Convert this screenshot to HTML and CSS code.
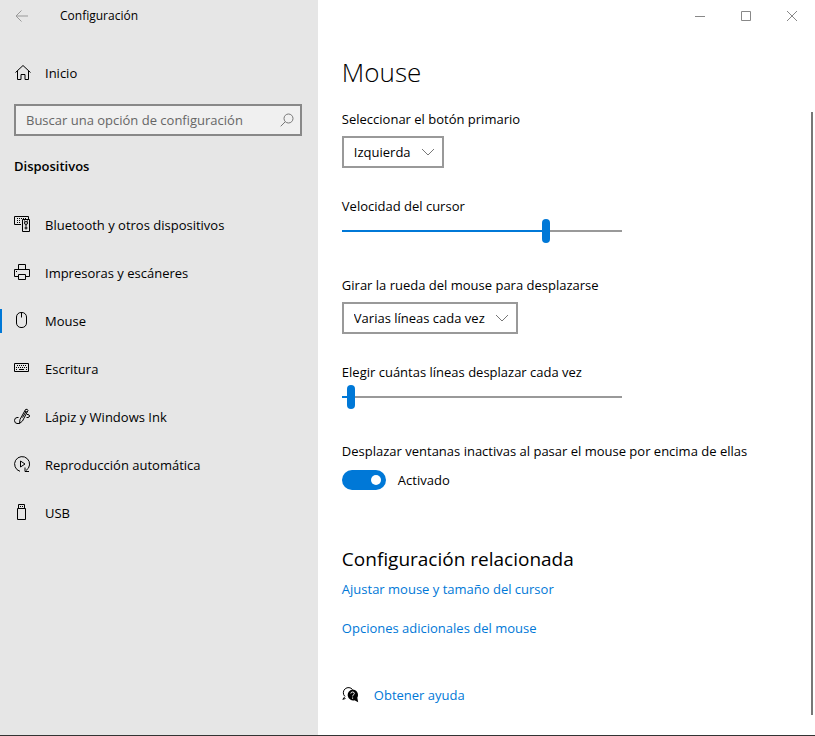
FILE: index.html
```html
<!DOCTYPE html>
<html lang="es">
<head>
<meta charset="utf-8">
<meta name="viewport" content="width=device-width, initial-scale=1">
<title>Configuración</title>
<link rel="stylesheet" href="styles.css">
</head>
<body>
<div class="window">
  <aside class="sidebar">
    <header class="app-bar">
      <button class="back" type="button" aria-label="Atrás">
        <svg width="14" height="12" viewBox="0 0 14 12"><path d="M6.500 .5L1 6l5.500 5.500M1 6h12"/></svg>
      </button>
      <span class="app-name">Configuración</span>
    </header>
    <a class="nav-link home" href="#inicio">
      <svg class="icon" width="17" height="18" viewBox="0 0 17 18"><path d="M1.500 8.500L9 1.500l7.500 7M3.500 7v8.500h3.500v-5h4v5h3.500V7"/></svg>
      <span>Inicio</span>
    </a>
    <form class="search">
      <input type="search" aria-label="Buscar una opción de configuración" placeholder="Buscar una opción de configuración">
      <button type="submit" aria-label="Buscar">
        <svg width="14" height="14" viewBox="0 0 14 14"><circle cx="8.500" cy="5.500" r="4.500"/><path d="M5.200 8.800L.7 13.300"/></svg>
      </button>
    </form>
    <h2 class="category">Dispositivos</h2>
    <nav class="nav">
      <a class="nav-link" href="#bluetooth">
        <svg class="icon" width="17" height="18" viewBox="0 0 17 18"><path d="M7 8.500H.5v-8h14V3"/><path d="M3 2.500h10M3 4.500h4M3 6.500h4" stroke-dasharray="1 1"/><path d="M8.500 3.500h7v12h-7z"/><circle cx="12" cy="7" r="1.500"/><circle cx="12" cy="12" r="1"/><path d="M10 5h1M13 5h1M12 9v1.500"/></svg>
        <span>Bluetooth y otros dispositivos</span>
      </a>
      <a class="nav-link" href="#impresoras">
        <svg class="icon" width="17" height="18" viewBox="0 0 17 18"><path d="M4.500 5.500v-5h7v5M4 12.500H.5v-7h15v7H12M4.500 10.500h7v5h-7zM2 7.500h1"/></svg>
        <span>Impresoras y escáneres</span>
      </a>
      <a class="nav-link current" href="#mouse" aria-current="page">
        <svg class="icon" width="17" height="18" viewBox="0 0 17 18"><rect x="2.500" y=".5" width="10" height="15" rx="4.500"/><path d="M7.500 .5v5"/></svg>
        <span>Mouse</span>
      </a>
      <a class="nav-link" href="#escritura">
        <svg class="icon" width="17" height="18" viewBox="0 0 17 18"><path d="M.5 3.500h14v8H.5z"/><path d="M3 5.500h10M2 7.500h11" stroke-dasharray="1 1"/><path d="M2 9.500h1M5 9.500h5M12 9.500h1"/></svg>
        <span>Escritura</span>
      </a>
      <a class="nav-link" href="#lapiz">
        <svg class="icon" width="17" height="18" viewBox="0 0 17 18"><path d="M5.500 15.500l.5-4L11.500 1.500q2-1 2.500 1L8.500 13zM11 3l2 1.200M8.500 9.500l3.500-6M4.500 9.500H3q-2.500.3-2.500 3T3 15.500h2.500M13 6.500h1q1.500.2 1.500 1.500t-1.500 1.500h-1.500"/></svg>
        <span>Lápiz y Windows Ink</span>
      </a>
      <a class="nav-link" href="#reproduccion">
        <svg class="icon" width="17" height="18" viewBox="0 0 17 18"><path d="M6 15.300A7.500 7.500 0 1 1 12 14.500M11 11.500v4h4M6.500 5v6l4.500-3z"/></svg>
        <span>Reproducción automática</span>
      </a>
      <a class="nav-link" href="#usb">
        <svg class="icon" width="17" height="18" viewBox="0 0 17 18"><path d="M3.500 4.500h8v11h-8zM4.500 4.500v-4h6v4M6 2.500h1M8 2.500h1"/></svg>
        <span>USB</span>
      </a>
    </nav>
  </aside>

  <main class="page">
    <div class="caption-buttons">
      <button type="button" aria-label="Minimizar"><svg width="12" height="12" viewBox="0 0 12 12"><path d="M1 6.500h10"/></svg></button>
      <button type="button" aria-label="Maximizar"><svg width="12" height="12" viewBox="0 0 12 12"><path d="M1.500 1.500h9v9h-9z"/></svg></button>
      <button type="button" aria-label="Cerrar"><svg width="12" height="12" viewBox="0 0 12 12"><path d="M1 1l10 10M11 1L1 11"/></svg></button>
    </div>
    <div class="content">
      <h1>Mouse</h1>
      <div class="field">
        <label for="primary">Seleccionar el botón primario</label>
        <div class="select">
          <select id="primary"><option>Izquierda</option><option>Derecha</option></select>
          <svg width="14" height="8" viewBox="0 0 14 8"><path d="M1 1l6 6 6-6"/></svg>
        </div>
      </div>
      <div class="field slider">
        <label for="speed">Velocidad del cursor</label>
        <input class="speed" id="speed" type="range" min="1" max="20" value="15">
      </div>
      <div class="field">
        <label for="wheel">Girar la rueda del mouse para desplazarse</label>
        <div class="select">
          <select id="wheel"><option>Varias líneas cada vez</option></select>
          <svg width="14" height="8" viewBox="0 0 14 8"><path d="M1 1l6 6 6-6"/></svg>
        </div>
      </div>
      <div class="field slider">
        <label for="lines">Elegir cuántas líneas desplazar cada vez</label>
        <input class="lines" id="lines" type="range" min="1" max="100" value="3">
      </div>
      <div class="field">
        <label for="inactive">Desplazar ventanas inactivas al pasar el mouse por encima de ellas</label>
        <div class="toggle">
          <input id="inactive" type="checkbox" role="switch" checked>
          <span>Activado</span>
        </div>
      </div>
      <section class="related">
        <h2>Configuración relacionada</h2>
        <a href="#ajustar">Ajustar mouse y tamaño del cursor</a>
        <a href="#opciones">Opciones adicionales del mouse</a>
      </section>
      <a class="help" href="#ayuda">
        <svg width="17" height="16" viewBox="0 0 17 16"><path class="line" d="M3 9.500L.8 12.300l2.700-.8M2.500 9A4.800 4.800 0 1 1 10.500 2.500"/><path d="M10.500 2.500a5.500 5.500 0 0 1 4.800 8.200l.9 4.500-3.700-1.900a5.500 5.500 0 1 1-2-10.800z"/><path class="mark" d="M8.800 6.500q.2-1.500 1.800-1.500t1.700 1.400q0 1-1 1.600-.7.400-.7 1.300M10.600 10.500v1.200"/></svg>
        <span>Obtener ayuda</span>
      </a>
    </div>
    <div class="scrollbar"></div>
  </main>
</div>
</body>
</html>
```
FILE: styles.css
```css
* { box-sizing: border-box; }

body {
  margin: 0;
  color: #000;
  background: #fff;
  font: 13px/20px "Open Sans", "Noto Sans", sans-serif;
}

button, input, select { font: inherit; color: inherit; }

button {
  display: flex;
  align-items: center;
  justify-content: center;
  padding: 0;
  border: 0;
  background: none;
}

svg { flex: none; fill: none; stroke: currentColor; }

h1, h2 { margin: 0; }

a { color: #0078d7; text-decoration: none; }

.window {
  display: flex;
  min-height: 100vh;
  border-bottom: 1px solid #333;
}

/* Sidebar */
.sidebar {
  flex: 0 0 39%;
  max-width: 318px;
  background: #e6e6e6;
}

.app-bar {
  display: flex;
  align-items: center;
  height: 32px;
  font-size: 12px;
}

.back { width: 44px; height: 32px; color: #999; }

.app-name { margin-left: 16px; }

.nav-link {
  display: flex;
  align-items: center;
  gap: 14px;
  height: 48px;
  padding-left: 14px;
  color: #000;
}

.home { margin-top: 17px; }

.current { background: linear-gradient(#0078d7, #0078d7) left center / 2px 24px no-repeat; }

.search {
  display: flex;
  height: 32px;
  margin: 7px 16px 0 14px;
  border: 2px solid #888;
  background: #f0f0f0;
}

.search input {
  flex: 1;
  min-width: 0;
  padding: 0 0 0 10px;
  border: 0;
  outline: 0;
  background: none;
}

.search input::placeholder { color: #666; opacity: 1; }

.search button { width: 26px; color: #777; }

.category {
  margin: 20px 14px 25px;
  font-size: 13px;
  line-height: 20px;
  font-weight: 600;
}

/* Page */
.page { position: relative; flex: 1; min-width: 0; }

.caption-buttons {
  display: flex;
  justify-content: flex-end;
  color: #888;
}

.caption-buttons button { width: 46px; height: 32px; }

.content { padding: 22px 24px 16px; }

h1 {
  margin-bottom: 19px;
  font-size: 26px;
  line-height: 36px;
  font-weight: 300;
}

.field {
  display: flex;
  flex-direction: column;
  align-items: flex-start;
  gap: 7px;
  margin-bottom: 28px;
}

.slider { gap: 3px; margin-bottom: 32px; }

.select { display: grid; align-items: center; }

.select select, .select svg { grid-area: 1 / 1; }

.select select {
  appearance: none;
  height: 32px;
  padding: 0 31px 0 10px;
  border: 2px solid #999;
  border-radius: 0;
  background: #fff;
}

.select svg {
  justify-self: end;
  margin-right: 9px;
  color: #777;
  pointer-events: none;
}

input[type="range"] {
  appearance: none;
  width: 280px;
  max-width: 100%;
  height: 24px;
  margin: 0;
  background: linear-gradient(90deg, #0078d7 var(--fill), #999 var(--fill)) center / 100% 2px no-repeat;
}

.speed { --fill: 73%; }
.lines { --fill: 3%; }

input[type="range"]::-webkit-slider-thumb {
  appearance: none;
  width: 8px;
  height: 24px;
  border-radius: 4px;
  background: #0078d7;
}

.toggle { display: flex; align-items: center; gap: 12px; margin-top: 2px; }

.toggle input {
  appearance: none;
  display: flex;
  align-items: center;
  justify-content: flex-end;
  width: 44px;
  height: 20px;
  margin: 0;
  padding: 0 5px;
  border-radius: 10px;
  background: #0078d7;
}

.toggle input::before {
  content: "";
  width: 10px;
  height: 10px;
  border-radius: 50%;
  background: #fff;
}

.related {
  display: flex;
  flex-direction: column;
  align-items: flex-start;
  gap: 19px;
  margin-top: 55px;
}

.related h2 {
  margin-bottom: -13px;
  font-size: 19px;
  line-height: 28px;
  font-weight: 400;
}

.help {
  display: flex;
  width: fit-content;
  align-items: center;
  gap: 15px;
  margin-top: 47px;
}

.help svg { color: #000; fill: #000; stroke: none; }
.help .line { fill: none; stroke: #000; }
.help .mark { fill: none; stroke: #fff; }

.scrollbar {
  position: absolute;
  top: 112px;
  right: 2px;
  bottom: 20px;
  width: 2px;
  background: #777;
}
```
